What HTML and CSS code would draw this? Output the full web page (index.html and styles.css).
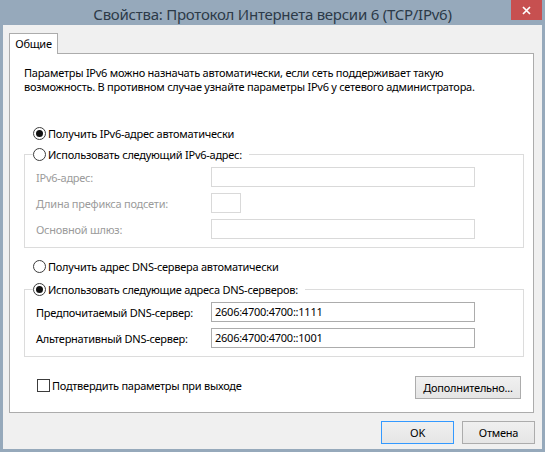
FILE: index.html
```html
<!DOCTYPE html>
<html lang="ru">
<head>
<meta charset="utf-8">
<title>Свойства: Протокол Интернета версии 6 (TCP/IPv6)</title>
<link rel="stylesheet" href="styles.css">
</head>
<body>
<div class="window">
  <div class="titlebar">
    <span class="spacer"></span>
    <div class="title">Свойства: Протокол Интернета версии 6 (TCP/IPv6)</div>
    <div class="close">
      <svg width="9" height="9" viewBox="0 0 9 9"><path d="M1 1 L8 8 M8 1 L1 8" stroke="#fff" stroke-width="1.7" fill="none"/></svg>
    </div>
  </div>
  <div class="client">
    <div class="tabs"><div class="tab">Общие</div></div>
    <div class="panel">
      <p class="intro">Параметры IPv6 можно назначать автоматически, если сеть поддерживает такую<br>возможность. В противном случае узнайте параметры IPv6 у сетевого администратора.</p>
      <div class="option opt1"><span class="radio checked"></span><span>Получить IPv6-адрес автоматически</span></div>
      <fieldset class="group group1">
        <legend><span class="option"><span class="radio"></span><span>Использовать следующий IPv6-адрес:</span></span></legend>
        <div class="fields">
          <span class="lbl disabled">IPv6-адрес:</span><span class="input off wide"></span>
          <span class="lbl disabled">Длина префикса подсети:</span><span class="input off small"></span>
          <span class="lbl disabled">Основной шлюз:</span><span class="input off wide"></span>
        </div>
      </fieldset>
      <div class="option opt3"><span class="radio"></span><span>Получить адрес DNS-сервера автоматически</span></div>
      <fieldset class="group group2">
        <legend><span class="option"><span class="radio checked"></span><span>Использовать следующие адреса DNS-серверов:</span></span></legend>
        <div class="fields">
          <span class="lbl">Предпочитаемый DNS-сервер:</span><span class="input wide">2606:4700:4700::1111</span>
          <span class="lbl">Альтернативный DNS-сервер:</span><span class="input wide">2606:4700:4700::1001</span>
        </div>
      </fieldset>
      <div class="bottom-row">
        <div class="check"><span class="box"></span><span>Подтвердить параметры при выходе</span></div>
        <button class="btn adv">Дополнительно...</button>
      </div>
    </div>
    <div class="actions">
      <button class="btn default">OK</button>
      <button class="btn">Отмена</button>
    </div>
  </div>
</div>
</body>
</html>
```
FILE: styles.css
```css
* { box-sizing: border-box; }
html, body { margin: 0; padding: 0; }
body {
  width: 545px;
  height: 452px;
  overflow: hidden;
  background: #96a9bb;
  font-family: "Noto Sans", "Open Sans", sans-serif;
  font-size: 11px;
  letter-spacing: -0.25px;
  color: #000;
}
.window { display: flex; flex-direction: column; height: 452px; }
.titlebar {
  height: 25px;
  display: grid;
  grid-template-columns: 1fr auto 1fr;
  grid-template-rows: 25px;
  align-items: start;
}
.title {
  font-size: 15px;
  letter-spacing: -0.25px;
  line-height: 20px;
  padding-top: 4px;
  color: #2c3a48;
  white-space: nowrap;
}
.close {
  justify-self: end;
  width: 31px;
  height: 20px;
  margin-right: 3px;
  background: #c75050;
  display: flex;
  align-items: center;
  justify-content: center;
}
.client {
  flex: 1;
  margin: 0 3px 3px;
  background: #f0f0f0;
  padding: 8px 8px 0 6px;
  display: flex;
  flex-direction: column;
}
.tabs { display: flex; }
.tab {
  width: 49px;
  height: 21px;
  margin-bottom: -1px;
  border: 1px solid #acacac;
  border-bottom: none;
  background: #fff;
  text-align: center;
  line-height: 19px;
  position: relative;
  z-index: 1;
}
.panel {
  width: 525px;
  height: 360px;
  border: 1px solid #acacac;
  background: #fff;
  display: flex;
  flex-direction: column;
}
.intro {
  margin: 12px 0 0 14px;
  line-height: 14px;
  white-space: nowrap;
}
.option {
  display: flex;
  align-items: center;
  height: 16px;
  white-space: nowrap;
}
.opt1 { margin: 31px 0 0 23px; }
.opt3 { margin: 10px 0 0 23px; }
.radio {
  width: 13px;
  height: 13px;
  border: 1px solid #3c3c3c;
  border-radius: 50%;
  background: #fff;
  margin-right: 2px;
  display: flex;
  align-items: center;
  justify-content: center;
  flex: none;
}
.radio.checked::after {
  content: "";
  width: 7px;
  height: 7px;
  border-radius: 50%;
  background: #111;
}
.group {
  margin: 5px 0 0 14px;
  width: 500px;
  border: 1px solid #dcdcdc;
  padding: 0 0 8px 11px;
  min-width: 0;
}
.group legend {
  padding: 0 7px 0 0;
  margin-left: -3px;
}
.group1 { margin-top: 5px; }
.group2 { margin-top: 7px; }
.fields {
  display: grid;
  grid-template-columns: 175px auto;
  row-gap: 6px;
  align-items: center;
  margin-top: 5px;
}
.lbl { white-space: nowrap; }
.disabled { color: #9b9b9b; }
.input {
  height: 20px;
  border: 1px solid #acacac;
  background: #fff;
  padding: 0 3px;
  line-height: 18px;
  white-space: nowrap;
}
.input.off { border-color: #d9d9d9; }
.input.wide { width: 264px; }
.input.small { width: 30px; }
.bottom-row {
  margin: auto 12px 13px 27px;
  display: flex;
  align-items: center;
  justify-content: space-between;
}
.check { display: flex; align-items: center; white-space: nowrap; margin-top: -4px; }
.box {
  width: 13px;
  height: 13px;
  border: 1px solid #3c3c3c;
  background: #fff;
  margin-right: 2px;
  flex: none;
}
.btn {
  font-family: inherit;
  font-size: 11px;
  letter-spacing: -0.25px;
  color: #000;
  height: 23px;
  width: 73px;
  padding: 0;
  border: 1px solid #acacac;
  background: linear-gradient(#f0f0f0, #e5e5e5);
  border-radius: 0;
  line-height: 21px;
}
.btn.adv { width: 106px; }
.btn.default { border-color: #3399ff; }
.actions {
  display: flex;
  justify-content: flex-end;
  gap: 8px;
  margin: 8px -1px 0 0;
}
```
